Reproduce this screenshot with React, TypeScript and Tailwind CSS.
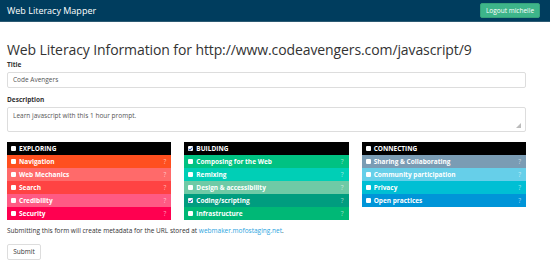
import { Check } from 'lucide-react';

type Item = { label: string; color: string; checked?: boolean };
type Group = { title: string; checked?: boolean; items: Item[] };

const groups: Group[] = [
  {
    title: 'EXPLORING',
    items: [
      { label: 'Navigation', color: 'bg-[#ff4f1f]' },
      { label: 'Web Mechanics', color: 'bg-[#ff6a6a]' },
      { label: 'Search', color: 'bg-[#ff4343]' },
      { label: 'Credibility', color: 'bg-[#ff5a84]' },
      { label: 'Security', color: 'bg-[#ff0050]' },
    ],
  },
  {
    title: 'BUILDING',
    checked: true,
    items: [
      { label: 'Composing for the Web', color: 'bg-[#00c282]' },
      { label: 'Remixing', color: 'bg-[#00cfb6]' },
      { label: 'Design & accessibility', color: 'bg-[#6fcaa6]' },
      { label: 'Coding/scripting', color: 'bg-[#009d7f]', checked: true },
      { label: 'Infrastructure', color: 'bg-[#00b876]' },
    ],
  },
  {
    title: 'CONNECTING',
    items: [
      { label: 'Sharing & Collaborating', color: 'bg-[#7a9cb4]' },
      { label: 'Community participation', color: 'bg-[#66cfe9]' },
      { label: 'Privacy', color: 'bg-[#00bfd4]' },
      { label: 'Open practices', color: 'bg-[#0095d8]' },
    ],
  },
];

function Box({ checked }: { checked?: boolean }) {
  return (
    <span className="w-[5px] h-[5px] bg-white rounded-[1px] flex items-center justify-center shrink-0">
      {checked && <Check className="w-[6px] h-[6px] text-[#2a5db0]" strokeWidth={5} />}
    </span>
  );
}

export default function App() {
  return (
    <div className="w-[550px] h-[267px] bg-white overflow-hidden font-['Open_Sans',sans-serif] text-[#333]">
      {/* Navbar */}
      <div className="h-[22px] bg-[#003d5e] flex items-center justify-between pl-[7px] pr-[10px] border-b border-[#2c5a73]">
        <span className="text-white text-[9px]">Web Literacy Mapper</span>
        <button className="h-[15px] w-[60px] bg-[#3db58a] text-white text-[6.5px] rounded-[2px] border border-[#36a27b]">
          Logout michelle
        </button>
      </div>

      <div className="px-[7px] w-[533px]">
        <h1 className="text-[14px] leading-[20px] mt-[18px] tracking-[-0.1px] whitespace-nowrap">
          Web Literacy Information for http://www.codeavengers.com/javascript/9
        </h1>

        <div className="text-[6.5px] font-bold leading-[9px]">Title</div>
        <div className="mt-[3px] h-[16px] border border-[#ddd] rounded-[2px] flex items-center px-[5px] text-[6.5px] text-[#555]">
          Code Avengers
        </div>

        <div className="mt-[7px] text-[6.5px] font-bold leading-[9px]">Description</div>
        <div className="mt-[3px] h-[25px] border border-[#ddd] rounded-[2px] px-[5px] pt-[3px] text-[6.5px] text-[#555] relative">
          Learn javascript with this 1 hour prompt.
          <svg className="absolute right-[4px] bottom-[3px]" width="5" height="5" viewBox="0 0 5 5">
            <path d="M5 0 L5 5 L0 5 Z" fill="#bbb" />
          </svg>
        </div>

        {/* Categories */}
        <div className="mt-[10px] grid grid-cols-3 gap-x-[13px] items-start">
          {groups.map((g) => (
            <div key={g.title} className="flex flex-col">
              <div className="h-[13px] bg-black text-white flex items-center gap-[3px] px-[4px] text-[6.5px] font-bold">
                <Box checked={g.checked} />
                <span>{g.title}</span>
              </div>
              {g.items.map((it) => (
                <div
                  key={it.label}
                  className={`h-[13px] ${it.color} text-white flex items-center gap-[3px] px-[4px] text-[6.5px] font-bold`}
                >
                  <Box checked={it.checked} />
                  <span className="flex-1">{it.label}</span>
                  <span className="font-normal text-white/60 pr-[1px]">?</span>
                </div>
              ))}
            </div>
          ))}
        </div>

        <p className="mt-[6px] text-[6.5px] leading-[10px] text-[#333]">
          Submitting this form will create metadata for the URL stored at{' '}
          <span className="text-[#2aa4e0]">webmaker.mofostaging.net</span>.
        </p>
        <button className="mt-[3px] h-[16px] w-[34px] border border-[#ddd] rounded-[2px] text-[6.5px] text-[#333] bg-white">
          Submit
        </button>
      </div>
    </div>
  );
}
